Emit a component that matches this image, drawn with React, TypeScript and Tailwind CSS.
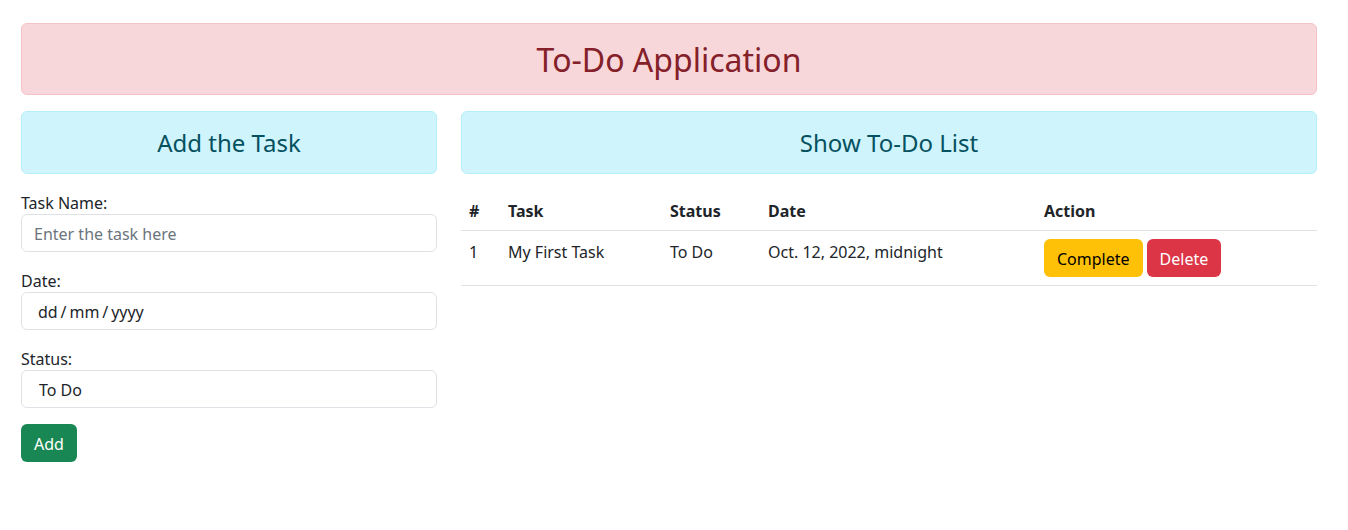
const inputCls =
  'w-full h-[38px] px-3 pt-[7px] pb-[5px] text-base leading-6 text-[#212529] bg-white border border-[#dee2e6] rounded-[6px] outline-none'

const btnCls = 'h-[38px] rounded-[6px] border border-transparent px-3 pt-px text-base leading-6'

function Field({ label, children }: { label: string; children: React.ReactNode }) {
  return (
    <div className="mb-4">
      <label className="relative top-px block text-base leading-6 text-[#212529]">{label}</label>
      {children}
    </div>
  )
}

export default function App() {
  const tasks = [{ id: 1, name: 'My First Task', status: 'To Do', date: 'Oct. 12, 2022, midnight' }]

  return (
    <div className="min-h-[530px] bg-white font-['Noto_Sans',sans-serif] text-[#212529]">
      <div className="ml-[21px] w-[1296px] pt-[23px]">
        <div className="mb-4 rounded-[6px] border border-[#f5c2c7] bg-[#f8d7da] pt-[17px] pb-[15px] px-4 text-center">
          <h2 className="text-[32px] leading-[1.2] font-normal text-[#842029]">To-Do Application</h2>
        </div>

        <div className="flex gap-6">
          <div className="w-[416px] shrink-0">
            <div className="mb-4 rounded-[6px] border border-[#b6effb] bg-[#cff4fc] pt-[17px] pb-[15px] px-4 text-center">
              <h4 className="text-2xl leading-[1.2] font-normal text-[#055160]">Add the Task</h4>
            </div>

            <form onSubmit={e => e.preventDefault()}>
              <Field label="Task Name:">
                <input className={`${inputCls} placeholder:text-[#6c757d]`} placeholder="Enter the task here" />
              </Field>
              <Field label="Date:">
                <div className={`${inputCls} pl-[16px] [word-spacing:-1.25px]`}>dd / mm / yyyy</div>
              </Field>
              <Field label="Status:">
                <div className={`${inputCls} pl-[17px]`}>To Do</div>
              </Field>
              <button type="submit" className={`${btnCls} bg-[#198754] text-white`}>
                Add
              </button>
            </form>
          </div>

          <div className="w-[856px] shrink-0">
            <div className="mb-4 rounded-[6px] border border-[#b6effb] bg-[#cff4fc] pt-[17px] pb-[15px] px-4 text-center">
              <h4 className="text-2xl leading-[1.2] font-normal text-[#055160]">Show To-Do List</h4>
            </div>

            <table className="w-full border-collapse text-left align-top text-base leading-6">
              <thead>
                <tr className="border-b border-[#dee2e6]">
                  <th className="w-[39px] pt-[9px] pb-[7px] px-2 font-bold">#</th>
                  <th className="w-[162px] pt-[9px] pb-[7px] px-2 font-bold">Task</th>
                  <th className="w-[98px] pt-[9px] pb-[7px] px-2 font-bold">Status</th>
                  <th className="w-[276px] pt-[9px] pb-[7px] px-2 font-bold">Date</th>
                  <th className="pt-[9px] pb-[7px] px-2 font-bold">Action</th>
                </tr>
              </thead>
              <tbody>
                {tasks.map(t => (
                  <tr key={t.id} className="border-b border-[#dee2e6]">
                    <td className="pt-[9px] px-2 align-top">{t.id}</td>
                    <td className="pt-[9px] px-2 align-top">{t.name}</td>
                    <td className="pt-[9px] px-2 align-top">{t.status}</td>
                    <td className="pt-[9px] px-2 align-top">{t.date}</td>
                    <td className="p-2 align-top">
                      <div className="flex gap-1">
                        <button className={`${btnCls} bg-[#ffc107] text-black`}>Complete</button>
                        <button className={`${btnCls} bg-[#dc3545] text-white`}>Delete</button>
                      </div>
                    </td>
                  </tr>
                ))}
              </tbody>
            </table>
          </div>
        </div>
      </div>
    </div>
  )
}
